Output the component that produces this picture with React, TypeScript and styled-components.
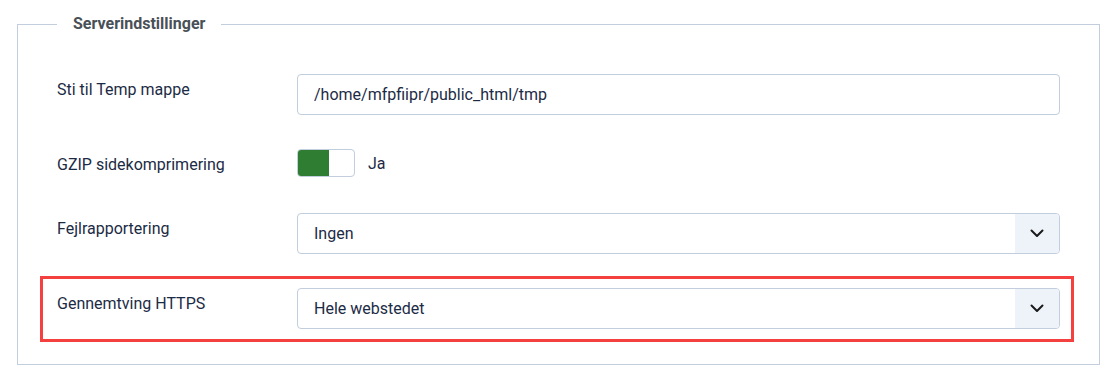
import styled, { createGlobalStyle } from 'styled-components';

const GlobalStyle = createGlobalStyle`
  html, body {
    margin: 0;
    padding: 0;
    background: #ffffff;
  }
  body {
    font-family: Roboto, "Noto Sans", "Liberation Sans", sans-serif;
    color: #1c2b45;
  }
`;

const Fieldset = styled.fieldset`
  margin: 14px 18px 0 17px;
  padding: 0;
  border: 1px solid #c2cddd;
  min-width: 0;
`;

const Legend = styled.legend`
  margin-left: 39px;
  padding: 0 16px;
  font-size: 16px;
  line-height: 20px;
  font-weight: 700;
  color: #495057;
`;

const Rows = styled.div`
  display: flex;
  flex-direction: column;
  gap: 9px;
  padding: 28px 25px 22px 22px;
`;

const Row = styled.div<{ $highlighted?: boolean }>`
  display: flex;
  align-items: flex-start;
  padding: 9px 11px 10px 14px;
  border: 3px solid ${(p) => (p.$highlighted ? '#f4403f' : 'transparent')};
`;

const Label = styled.label`
  flex: 0 0 240px;
  padding-top: 4px;
  font-size: 16px;
  line-height: 24px;
  color: #1c2b45;
`;

const Control = styled.div`
  flex: 1;
  display: flex;
  align-items: center;
`;

const TextInput = styled.input`
  box-sizing: border-box;
  width: 100%;
  height: 41px;
  padding: 0 16px;
  border: 1px solid #c2cddd;
  border-radius: 4px;
  font-family: inherit;
  font-size: 16px;
  color: #1c2b45;
  background: #fff;
  outline: none;
`;

const SelectBox = styled.div`
  box-sizing: border-box;
  width: 100%;
  height: 41px;
  display: flex;
  align-items: stretch;
  border: 1px solid #c2cddd;
  border-radius: 4px;
  overflow: hidden;
  background: #fff;
`;

const SelectValue = styled.span`
  flex: 1;
  display: flex;
  align-items: center;
  padding-left: 16px;
  font-size: 16px;
  color: #1c2b45;
`;

const SelectArrow = styled.span`
  flex: 0 0 44px;
  display: flex;
  align-items: center;
  justify-content: center;
  background: #eef3fa;
`;

const Switch = styled.div`
  box-sizing: border-box;
  width: 58px;
  height: 28px;
  margin-bottom: 2px;
  display: flex;
  border: 1px solid #c2cddd;
  border-radius: 4px;
  overflow: hidden;
  background: #fff;
`;

const SwitchOn = styled.span`
  width: 31px;
  background: #2e7d32;
`;

const SwitchText = styled.span`
  margin-left: 13px;
  font-size: 16px;
  line-height: 24px;
  color: #1c2b45;
`;

const Chevron = () => (
  <svg width="14" height="9" viewBox="0 0 14 9" fill="none">
    <polyline points="1.5,1.5 7,7 12.5,1.5" stroke="#1a1a1a" strokeWidth="2" strokeLinecap="round" strokeLinejoin="round" />
  </svg>
);

const Select: React.FC<{ value: string }> = ({ value }) => (
  <SelectBox>
    <SelectValue>{value}</SelectValue>
    <SelectArrow>
      <Chevron />
    </SelectArrow>
  </SelectBox>
);

export default function App() {
  return (
    <>
      <GlobalStyle />
      <Fieldset>
        <Legend>Serverindstillinger</Legend>
        <Rows>
          <Row>
            <Label>Sti til Temp mappe</Label>
            <Control>
              <TextInput defaultValue="/home/mfpfiipr/public_html/tmp" />
            </Control>
          </Row>
          <Row>
            <Label>GZIP sidekomprimering</Label>
            <Control>
              <Switch>
                <SwitchOn />
              </Switch>
              <SwitchText>Ja</SwitchText>
            </Control>
          </Row>
          <Row>
            <Label>Fejlrapportering</Label>
            <Control>
              <Select value="Ingen" />
            </Control>
          </Row>
          <Row $highlighted>
            <Label>Gennemtving HTTPS</Label>
            <Control>
              <Select value="Hele webstedet" />
            </Control>
          </Row>
        </Rows>
      </Fieldset>
    </>
  );
}
